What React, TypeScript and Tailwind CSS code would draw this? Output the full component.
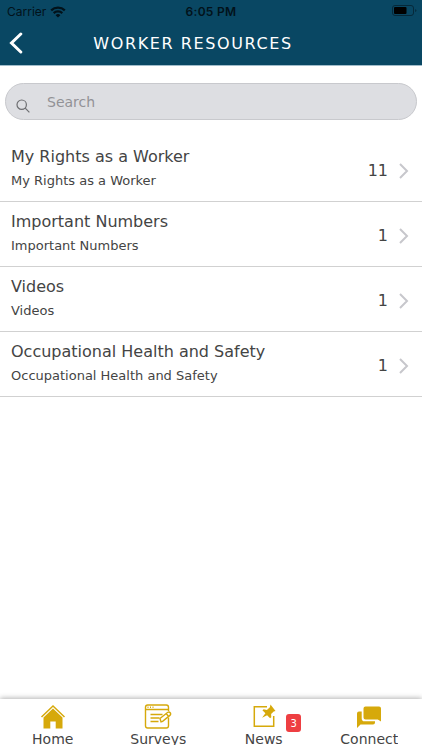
import type { ReactNode } from "react";

const resources = [
  { title: "My Rights as a Worker", count: 11 },
  { title: "Important Numbers", count: 1 },
  { title: "Videos", count: 1 },
  { title: "Occupational Health and Safety", count: 1 },
];

function StatusBar() {
  return (
    <div className="grid h-6 grid-cols-3 items-center px-[7px] text-[#02121a]">
      <div className="flex h-5 items-center gap-1 font-['Inter',sans-serif] text-xs">
        Carrier
        <svg className="h-3 w-4" viewBox="0 0 16 12" fill="none" stroke="currentColor" strokeWidth="2.2" aria-hidden="true">
          <path d="M1.2 4.4a9.8 9.8 0 0 1 13.6 0" />
          <path d="M3.7 7.1a6.2 6.2 0 0 1 8.6 0" />
          <path d="M8 11.6 5.6 9.2a3.4 3.4 0 0 1 4.8 0z" fill="currentColor" stroke="none" />
        </svg>
      </div>
      <div className="text-center font-['Inter',sans-serif] text-xs font-semibold tracking-wide">6:05 PM</div>
      <svg className="-mt-1 -mr-1 h-3 w-7 justify-self-end" viewBox="0 0 28 12" aria-hidden="true">
        <rect x="1.5" y="1.500" width="21" height="10" rx="2.5" fill="none" stroke="#06293a" />
        <rect x="3" y="3" width="12.500" height="7" rx="1" fill="#000" />
        <path d="M24.200 5v3q1.200-.5 1.200-1.500t-1.200-1.500" fill="#06293a" />
      </svg>
    </div>
  );
}

function Tab({ label, badge, children }: { label: string; badge?: number; children: ReactNode }) {
  return (
    <a href="#" className="relative flex flex-col items-center gap-px pt-[3px]">
      <svg className="h-7 w-7 text-[#d6a90b]" viewBox="0 0 28 28" fill="none" stroke="currentColor" aria-hidden="true">
        {children}
      </svg>
      <span className="h-[14px] overflow-hidden text-sm leading-4 text-[#444]">{label}</span>
      {badge !== undefined && (
        <span className="absolute top-[15px] left-3/4 -ml-1 flex h-[18px] w-[15px] items-center justify-center rounded-[3px] bg-[#ee3f42] text-[10px] text-white">
          {badge}
        </span>
      )}
    </a>
  );
}

export default function App() {
  return (
    <div className="flex h-screen flex-col bg-white font-['DejaVu_Sans',Verdana,sans-serif] text-[#444]">
      <header className="h-[66px] shrink-0 border-b border-[#a1bdcb] bg-[#094763]">
        <StatusBar />
        <div className="grid h-10 grid-cols-[40px_1fr_40px] items-center">
          <button type="button" aria-label="Back" className="flex h-10 items-center pl-2 text-white">
            <svg className="h-6 w-4" viewBox="0 0 16 24" fill="none" stroke="currentColor" strokeWidth="3" strokeLinecap="round" aria-hidden="true">
              <path d="M12.800 2 3.500 11 12.800 20" />
            </svg>
          </button>
          <h1 className="-ml-10 pl-1 text-center text-base tracking-widest text-white">WORKER RESOURCES</h1>
        </div>
      </header>

      <main className="flex-1 overflow-auto">
        <label className="mx-[5px] mt-[17px] flex h-[37px] items-center rounded-full border border-[#c8c9cd] bg-[#dddee2] pl-2.5">
          <svg className="mt-2 h-3.5 w-3.5 shrink-0 text-[#6d6e71]" viewBox="0 0 14 14" fill="none" stroke="currentColor" strokeWidth="1.2" aria-hidden="true">
            <circle cx="5.700" cy="5.700" r="4.700" />
            <path d="m9.200 9.200 4.200 4.200" />
          </svg>
          <input
            type="search"
            aria-label="Search"
            placeholder="Search"
            className="ml-[17px] min-w-0 flex-1 bg-transparent text-sm outline-none placeholder:text-[#929296]"
          />
        </label>

        <ul className="mt-[17px]">
          {resources.map(({ title, count }) => (
            <li key={title} className="border-b border-[#d1d1d1]">
              <a href="#" className="flex h-16 items-center pr-3 pl-[11px]">
                <span className="flex-1">
                  <span className="block text-base leading-6">{title}</span>
                  <span className="block text-[13px] leading-6">{title}</span>
                </span>
                <span className="flex items-center gap-2.5 pt-[3px] text-base">
                  {count}
                  <svg className="h-4 w-3 text-[#c7c7cc]" viewBox="0 0 12 16" fill="none" stroke="currentColor" strokeWidth="2" aria-hidden="true">
                    <path d="m2 1 7 7-7 7" />
                  </svg>
                </span>
              </a>
            </li>
          ))}
        </ul>
      </main>

      <nav className="grid h-[51px] shrink-0 grid-cols-4 bg-white shadow-[0_-1px_5px_rgba(0,0,0,0.3)]">
        <Tab label="Home">
          <path d="M2.500 15 14 4l11.500 11" strokeWidth="1.500" />
          <path d="M14 6.500 4.500 15.500V26.500h6.800v-7h5.400v7h6.800V15.500z" fill="currentColor" stroke="none" />
        </Tab>
        <Tab label="Surveys">
          <g strokeWidth="1.400">
            <path d="M24.500 9V5.200Q24.500 3 22.300 3H3.700Q1.500 3 1.500 5.200v18.600Q1.500 26 3.700 26h18.600q2.200 0 2.200-2.200V15.500M1.500 7.500h23" />
            <path d="M3.500 5.300h1m1.500 0h1m1.500 0h1" />
            <path d="M6.500 12.500h12m-12 3.500h9m-9 3.500h6m-6 0h8" />
            <path d="m17 19.800-1-3.300 7.500-6q1.700-1 2.700.3t-.3 2.600l-7.300 5.900zM22.200 11.500l2 2.500" fill="white" />
          </g>
        </Tab>
        <Tab label="News" badge={3}>
          <path d="M17 4.800H4.300v19.400h19.400V14" strokeWidth="1.500" />
          <path d="m20.500 2.500 5 6.500-1.800.5-2.600 2.500.2 3.200-1.200 1-3-3-5 2.600 3.300-4.600-3-3 1.300-1 3.200.7 3-2.600z" fill="currentColor" stroke="none" />
        </Tab>
        <Tab label="Connect">
          <path d="M10.500 4.500H24q2 0 2 2v13L22.800 17.500H10.500q-2 0-2-2v-9q0-2 2-2" fill="currentColor" stroke="none" />
          <path d="M6.700 9.500H4q-2 0-2 2V26L5.500 22.500H18q2 0 2-2v-1.300H9.500q-2.800 0-2.800-2.800z" fill="currentColor" stroke="none" />
        </Tab>
      </nav>
    </div>
  );
}
